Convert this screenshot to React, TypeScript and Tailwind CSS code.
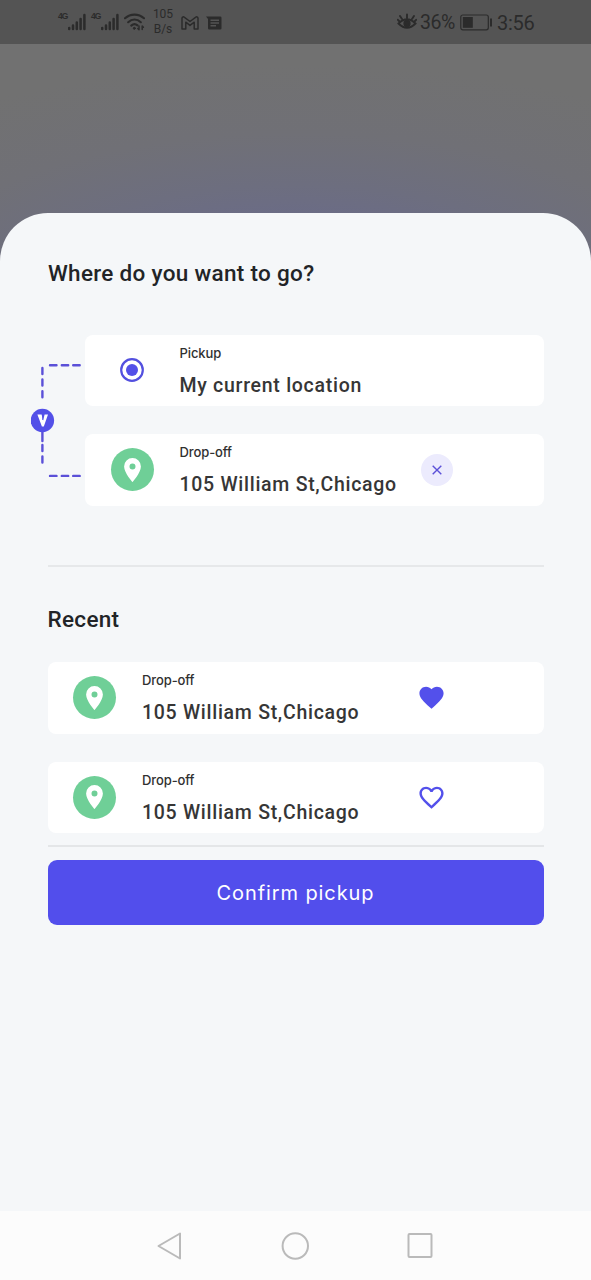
import type { ReactNode } from "react";

function Signal() {
  return (
    <div className="flex h-5 w-7 shrink-0">
      <span className="-mt-[1px] w-[10px] font-['Liberation_Sans',sans-serif] text-[8.500px] leading-[10px] font-bold tracking-[-1px]">4G</span>
      <svg className="mt-[1px] h-[18px] w-[18px] shrink-0" viewBox="0 0 18 18" stroke="currentColor" strokeWidth="2.500" strokeLinecap="round">
        <path d="M1.200 16v-1M5 16v-3.500M8.800 16V9.500M12.600 16V6M16.400 16V2" />
      </svg>
    </div>
  );
}

function StatusBar() {
  return (
    <header className="flex h-11 shrink-0 items-center bg-[#545454] pl-[58px] font-[Roboto,sans-serif] text-[#2b2b2b]">
      <Signal />
      <div className="ml-[5px] flex">
        <Signal />
      </div>
      <svg className="ml-[5px] h-[20px] w-[21px] shrink-0" viewBox="0 0 21 20" fill="none" stroke="currentColor" strokeWidth="2.200" strokeLinecap="round">
        <path d="M1 6.200C6.500 1.300 14.500 1.300 20 6.200M4.200 10.200C8 6.800 13 6.800 16.800 10.200M7.300 13.600C9.300 11.900 11.700 11.900 13.500 13.400" />
        <circle cx="10.300" cy="16.300" r="1" fill="currentColor" strokeWidth="1" />
        <path d="M15 14v3.500M13.800 16.500l1.200 1.200M18.200 17.500V14M18.200 14l1.200 1.200" strokeWidth="1.500" />
      </svg>
      <div className="ml-[7px] w-[22px] text-center text-[12px] leading-[15px]">
        <div>105</div>
        <div>B/s</div>
      </div>
      <svg className="mt-[2px] ml-[7px] h-[14px] w-[18px] shrink-0" viewBox="0 0 18 14" fill="none" stroke="currentColor" strokeWidth="1.500" strokeLinejoin="round">
        <path d="M1 2.200C1 .8 2.500.500 3.500 1.300L9 5.500l5.500-4.200C15.500.500 17 .8 17 2.200V13h-3.800V6.200L9 9.400 4.800 6.200V13H1z" />
      </svg>
      <svg className="mt-[2px] ml-[7px] h-[14px] w-[16px] shrink-0" viewBox="0 0 16 14">
        <path d="M0 .500h14.200q1.300 0 1.300 1.300v10.400q0 1.300-1.300 1.300H3.300Q2 13.500 2 12.200V3z" fill="currentColor" />
        <path d="M4.500 4.200h8.500M4.500 7h8.500M4.500 9.800h5.500" stroke="#545454" strokeWidth="1.400" />
      </svg>
      <svg className="ml-[175px] h-[18px] w-[20px] shrink-0" viewBox="0 0 20 18" fill="none" stroke="currentColor" strokeWidth="1.900" strokeLinecap="round">
        <path d="M1.500 10.500Q10 2 18.500 10.500Q10 19 1.500 10.500zM10 5V1.500M5 6 3 3M15 6l2-3M2.500 8.500.900 6.800M17.500 8.500l1.600-1.700" />
        <circle cx="10" cy="10.500" r="2.700" fill="currentColor" />
      </svg>
      <span className="mt-[2px] ml-[3px] w-[36px] text-[19.500px] leading-6 tracking-[-0.500px]">36%</span>
      <svg className="mt-[1px] ml-[4px] h-[17px] w-[33px] shrink-0" viewBox="0 0 33 17" fill="none" stroke="currentColor">
        <rect x=".8" y="1" width="27.500" height="14.800" rx="2" strokeWidth="1.200" />
        <rect x="2.800" y="3" width="10" height="10.800" fill="currentColor" stroke="none" />
        <path d="M31 4.500v8" strokeWidth="2" />
      </svg>
      <span className="mt-[2px] ml-[4px] text-[20px] leading-6 tracking-[-0.300px]">3:56</span>
    </header>
  );
}

function Pin() {
  return (
    <div className="flex size-[43px] shrink-0 items-center justify-center rounded-full bg-[#6fcf97]">
      <svg className="h-6 w-[17px]" viewBox="0 0 17 24" fill="#fff">
        <path fillRule="evenodd" d="M8.500 0A8.400 8.400 0 0 0 .1 8.400C.1 14.700 8.500 24 8.500 24s8.400-9.300 8.400-15.600A8.400 8.400 0 0 0 8.500 0zm0 5.400a3 3 0 1 1 0 6 3 3 0 0 1 0-6z" />
      </svg>
    </div>
  );
}

function Place({ label, value }: { label: string; value: string }) {
  return (
    <div className="flex flex-col whitespace-nowrap text-[#363636]">
      <span className="mt-[9px] font-[Inter,sans-serif] text-[13px] leading-[18px] font-medium tracking-[-0.100px] text-[#303030]">{label}</span>
      <span className="mt-[12px] font-[Roboto,sans-serif] text-[19.500px] leading-6 font-medium tracking-[0.720px]">{value}</span>
    </div>
  );
}

function Card({ children }: { children: ReactNode }) {
  return <div className="flex h-[71.500px] w-full rounded-[8px] bg-white">{children}</div>;
}

function Connector() {
  return (
    <svg className="h-[171px] w-[54px] shrink-0" viewBox="0 0 54 171" fill="none">
      <g stroke="#5b50d8" strokeWidth="2.400" strokeLinecap="round">
        <path d="M19 30.300h6.500M30.800 30.300h6.400M42.200 30.300h6.500M19 140.900h6.500M30.800 140.900h6.400M42.200 140.900h6.500" />
        <path d="M11.400 33v6M11.400 44.500v6M11.400 56.300v6M11.400 97v9M11.400 110v6M11.400 121.500v6" />
      </g>
      <circle cx="11.400" cy="85.500" r="11.700" fill="#5350e8" />
      <path d="M6.400 79.500h4.200l1.500 6 1.500-6h3.400L12.800 91.500h-1.900z" fill="#fff" />
      <path d="M11.700 79.500v5.500" stroke="#5350e8" strokeWidth=".9" />
    </svg>
  );
}

const heart =
  "M16.500 3c-1.740 0-3.410.810-4.500 2.090C10.910 3.810 9.240 3 7.500 3 4.420 3 2 5.420 2 8.500c0 3.780 3.400 6.860 8.550 11.540L12 21.350l1.450-1.320C18.600 15.360 22 12.280 22 8.500 22 5.420 19.580 3 16.500 3z";

function Recent({ favorite }: { favorite?: boolean }) {
  return (
    <Card>
      <div className="flex w-[94.500px] shrink-0 items-center pl-[25.500px]">
        <Pin />
      </div>
      <div className="w-[274.500px] shrink-0">
        <Place label="Drop-off" value="105 William St,Chicago" />
      </div>
      <svg className="mt-[21px] size-[29px] shrink-0" viewBox="0 0 24 24" fill="#5350eb">
        <path
          fillRule="evenodd"
          d={favorite ? heart : heart + "m-4.400 15.550l-.1.100-.1-.1C7.140 14.240 4 11.390 4 8.500 4 6.500 5.500 5 7.500 5c1.540 0 3.040.990 3.570 2.360h1.870C13.460 5.990 14.960 5 16.500 5c2 0 3.500 1.500 3.500 3.500 0 2.890-3.140 5.740-7.900 10.050z"}
        />
      </svg>
    </Card>
  );
}

export default function App() {
  return (
    <div className="flex h-[1280px] w-full flex-col overflow-hidden bg-[radial-gradient(ellipse_620px_245px_at_50%_290px,#696b8a_0%,#6b6c86_30%,#6d6e7f_43%,#707076_64%,#717171_92%)]">
      <StatusBar />
      <main className="mt-[169px] flex flex-1 flex-col rounded-t-[48px] bg-[#f5f7f9] font-[Roboto,sans-serif]">
        <h1 className="mt-[45px] pl-[48px] text-[22.500px] leading-[30px] font-medium tracking-[0.310px] text-[#222427]">Where do you want to go?</h1>
        <section className="mt-[46.500px] flex pr-[47.500px] pl-[31px]">
          <Connector />
          <div className="flex flex-1 flex-col gap-[28px]">
            <Card>
              <div className="flex w-[94.500px] shrink-0 items-center justify-center">
                <svg className="size-6" viewBox="0 0 24 24" fill="none">
                  <circle cx="12" cy="12" r="10.800" stroke="#5350df" strokeWidth="2.200" />
                  <circle cx="12" cy="12" r="6" fill="#5350e8" />
                </svg>
              </div>
              <Place label="Pickup" value="My current location" />
            </Card>
            <Card>
              <div className="flex w-[94.500px] shrink-0 items-center justify-center">
                <Pin />
              </div>
              <div className="w-[241.500px] shrink-0">
                <Place label="Drop-off" value="105 William St,Chicago" />
              </div>
              <button className="mt-[20px] flex size-8 shrink-0 items-center justify-center rounded-full bg-[#ecebfd]">
                <svg className="size-[10px]" viewBox="0 0 10 10" stroke="#5b50d8" strokeWidth="1.400">
                  <path d="M.7.700l8.600 8.600M9.300.700.700 9.300" />
                </svg>
              </button>
            </Card>
          </div>
        </section>
        <section className="flex flex-col px-[47.500px]">
          <div className="mt-[59.500px] h-[2px] bg-[#e6e8ea]" />
          <h2 className="mt-[37px] text-[22.500px] leading-[30px] font-medium tracking-[0.310px] text-[#222427]">Recent</h2>
          <div className="mt-[28px] flex flex-col gap-[28px]">
            <Recent favorite />
            <Recent />
          </div>
          <div className="mt-[12px] h-[2px] bg-[#e4e6e8]" />
          <button className="mt-[12.500px] flex h-[65.500px] items-center justify-center rounded-[9px] bg-[#524eec] pt-[1px] font-[Inter,sans-serif] text-[20px] tracking-[0.900px] text-white">
            Confirm pickup
          </button>
        </section>
      </main>
      <nav className="flex h-[69px] shrink-0 items-center bg-[#fcfcfc] pl-[157px]">
        <svg className="h-[28px] w-[276px]" viewBox="0 0 276 28" fill="none" stroke="#bababa" strokeWidth="2" strokeLinejoin="round">
          <path d="M1.500 14 23 1.500v25z" />
          <circle cx="138.300" cy="14" r="12.700" />
          <rect x="251.500" y="2" width="23" height="23" rx="1" />
        </svg>
      </nav>
    </div>
  );
}
